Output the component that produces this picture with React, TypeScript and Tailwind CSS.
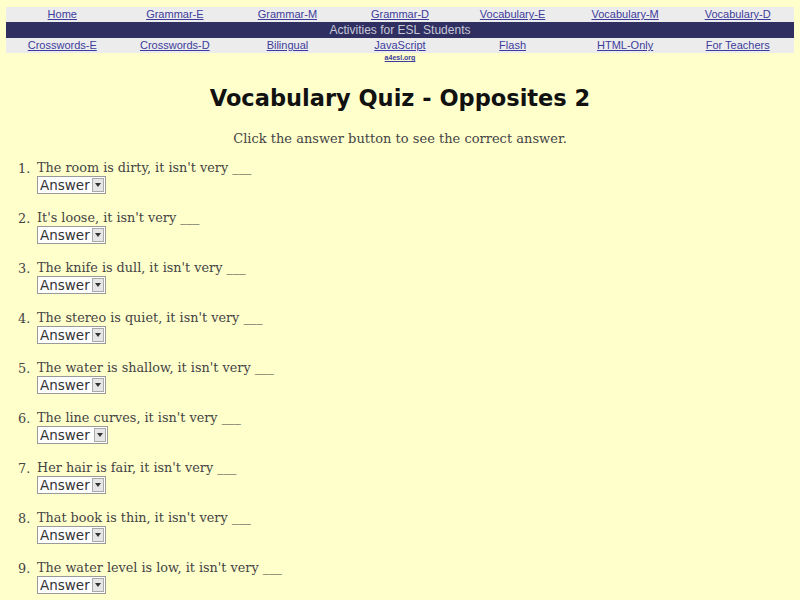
import React from 'react';

const topLinks = ['Home', 'Grammar-E', 'Grammar-M', 'Grammar-D', 'Vocabulary-E', 'Vocabulary-M', 'Vocabulary-D'];
const bottomLinks = ['Crosswords-E', 'Crosswords-D', 'Bilingual', 'JavaScript', 'Flash', 'HTML-Only', 'For Teachers'];

const questions = [
  'The room is dirty, it isn\'t very ___',
  'It\'s loose, it isn\'t very ___',
  'The knife is dull, it isn\'t very ___',
  'The stereo is quiet, it isn\'t very ___',
  'The water is shallow, it isn\'t very ___',
  'The line curves, it isn\'t very ___',
  'Her hair is fair, it isn\'t very ___',
  'That book is thin, it isn\'t very ___',
  'The water level is low, it isn\'t very ___',
];

const AnswerBox = ({ wide }: { wide?: boolean }) => (
  <div className={`flex h-[18px] items-stretch border border-[#9a9a9a] bg-white font-['DejaVu_Sans',sans-serif] ${wide ? 'w-[71px]' : 'w-[69px]'}`}>
    <span className="flex-1 pl-[2px] text-[13.5px] leading-[16px] text-[#333]">Answer</span>
    <span className="m-[1px] flex w-[12px] items-center justify-center border border-[#aaa] bg-[#e6e6e6]">
      <svg width="6" height="4" viewBox="0 0 6 4">
        <path d="M0 0 L6 0 L3 4 Z" fill="#333" />
      </svg>
    </span>
  </div>
);

export default function App() {
  return (
    <div className="min-h-[600px] w-[800px] bg-[#ffffcc] pt-[7px] font-['DejaVu_Sans',sans-serif]">
      {/* nav table */}
      <div className="mx-[6px] font-['Liberation_Sans',Arial,sans-serif] text-[11px]">
        <div className="grid h-[15px] grid-cols-7 items-center bg-[#ececec]">
          {topLinks.map((l) => (
            <a key={l} href="#" className="text-center leading-[15px] text-[#3c3c9c] underline">
              {l}
            </a>
          ))}
        </div>
        <div className="h-[16px] bg-[#2f2f62] text-center text-[12px] leading-[16px] text-[#c8c8d8]">
          Activities for ESL Students
        </div>
        <div className="grid h-[15px] grid-cols-7 items-center bg-[#ececec]">
          {bottomLinks.map((l) => (
            <a key={l} href="#" className="text-center leading-[15px] text-[#3c3c9c] underline">
              {l}
            </a>
          ))}
        </div>
        <div className="grid grid-cols-7">
          <div className="col-start-4 text-center text-[7px] font-bold leading-[9px] text-[#3c3c9c] underline">a4esl.org</div>
        </div>
      </div>

      <h1 className="mt-[21px] text-center text-[22.5px] font-bold leading-[30px] text-[#111]">
        Vocabulary Quiz - Opposites 2
      </h1>
      <p className="mt-[18px] text-center font-['DejaVu_Serif',serif] text-[13px] leading-[16px] text-[#444]">
        Click the answer button to see the correct answer.
      </p>

      <ol className="mt-[12px] font-['DejaVu_Serif',serif] text-[12.8px] text-[#444]">
        {questions.map((q, i) => (
          <li key={i} className="flex h-[50px] items-start pl-[18px]">
            <span className="w-[19px]">{i + 1}.</span>
            <div>
              <div className="leading-[17px]">{q}</div>
              <AnswerBox wide={i === 5} />
            </div>
          </li>
        ))}
      </ol>
    </div>
  );
}
